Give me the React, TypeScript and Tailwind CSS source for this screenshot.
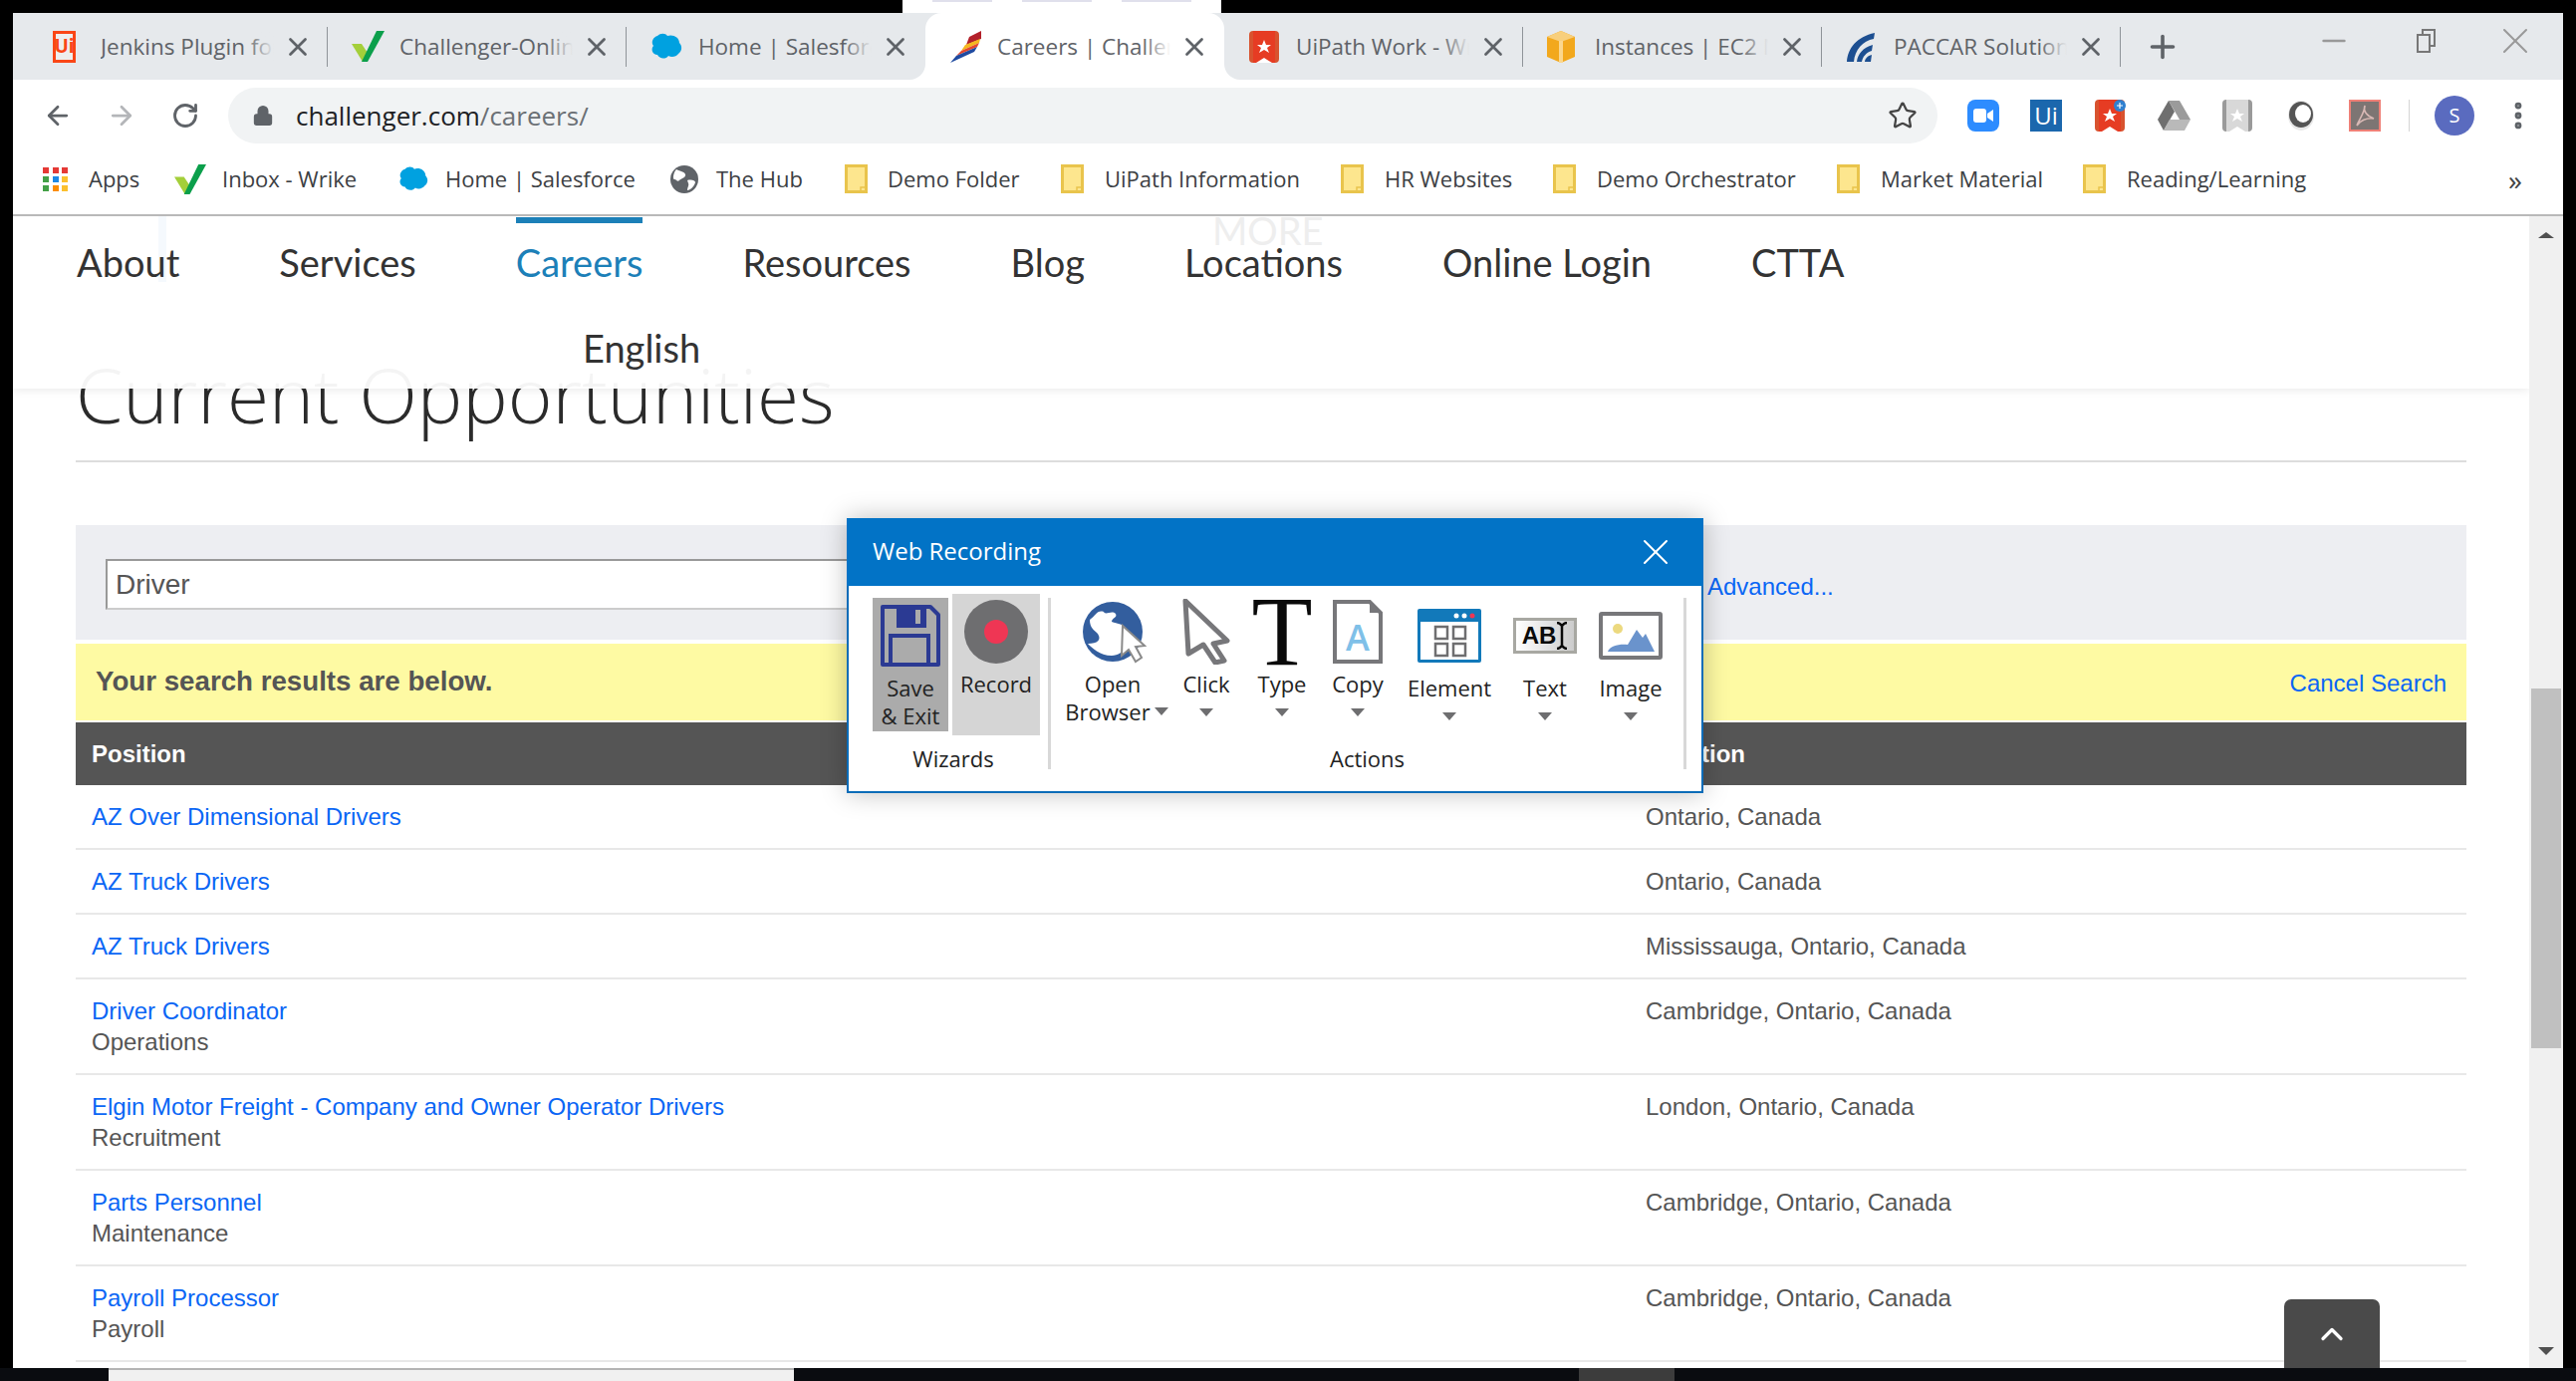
import { ArrowLeft, ArrowRight, RotateCw, Lock, Star, X, Plus, Minus, ChevronUp, EllipsisVertical } from 'lucide-react';
import type { ReactNode } from 'react';

// favicons
const UiFav = () => (
  <div className="w-[23px] h-[32px] border-[3px] border-[#fa4616] bg-[#eee] flex items-center justify-center text-[#fa4616] text-[19px] font-bold leading-none">Ui</div>
);
const WrikeCheck = ({ w = 33 }: { w?: number }) => (
  <svg width={w} height={w} viewBox="0 0 33 33">
    <path d="M0 14h10l6 9-5 9z" fill="#a4cf3a" />
    <path d="M10 32 25 1h8L16 32z" fill="#0b9f4b" />
  </svg>
);
const SfCloud = ({ w = 32 }: { w?: number }) => (
  <svg width={w} height={w} viewBox="0 0 32 32">
    <path d="M7 5c3-3 8-3 10 0 5-2 12 1 12 7 3 3 3 8-1 11-2 3-7 4-10 2-3 4-9 3-11-1-5 0-7-6-4-9-3-4 0-9 4-10z" fill="#00a1e0" />
  </svg>
);
const ChallengerFav = () => (
  <svg width="33" height="32" viewBox="0 0 33 32">
    <path d="M20 6 32 0v8L17 14z" fill="#b3202a" />
    <path d="M16 14 31 8l-1 4L12 20z" fill="#f5b81f" />
    <path d="M12 20 30 12l-2 4L7 25z" fill="#e5482d" />
    <path d="M7 25 28 16l-3 5L1 32z" fill="#1f4aa0" />
  </svg>
);
const RibbonFav = ({ plus = false, gray = false }: { plus?: boolean; gray?: boolean }) => (
  <svg width="32" height="32" viewBox="0 0 32 32">
    <rect x="1" y="0" width="30" height="32" rx="4" fill={gray ? '#9a9a9a' : '#d8532f'} />
    <rect x="5" y="0" width="22" height="32" fill={gray ? '#d8d8d8' : '#e63c23'} />
    <path d="M16 9l2 5h5l-4 3 2 5-5-3-5 3 2-5-4-3h5z" fill="#fff" />
    <path d="M8 32l8-5 8 5z" fill="#fff" />
    {plus && <circle cx="26" cy="6" r="6" fill="#2f80d0" />}
    {plus && <path d="M26 3v6M23 6h6" stroke="#fff" strokeWidth="1.2" />}
  </svg>
);
const BoxFav = () => (
  <svg width="28" height="32" viewBox="0 0 28 32">
    <path d="M14 0 28 6v20l-14 6L0 26V6z" fill="#f2a81d" />
    <path d="M14 0 28 6 14 11 0 6z" fill="#f8cf7c" />
    <path d="M12 10h4v22h-4z" fill="#fbd78e" />
  </svg>
);
const PaccarFav = () => (
  <svg width="30" height="32" viewBox="0 0 30 32">
    <path d="M1 31C2 17 11 6 29 2l-1 6C17 10 9 19 8 31z" fill="#1d4f91" />
    <path d="M11 31c1-8 6-14 16-17l-1 6c-6 2-9 6-10 11z" fill="#1d4f91" />
    <path d="M19 31c0-3 3-6 7-7l-1 7z" fill="#1d4f91" />
  </svg>
);
const Folder = () => (
  <svg width="23" height="29" viewBox="0 0 23 29">
    <path d="M1.5 1.5h20v26h-20z" fill="#fde68e" stroke="#e9c44c" strokeWidth="3" />
    <path d="M16 28v-5h5" fill="none" stroke="#e9c44c" strokeWidth="1.5" />
  </svg>
);
const AppsIcon = () => {
  const colors = ['#e53935', '#e53935', '#e53935', '#43a047', '#1e88e5', '#fbc02d', '#43a047', '#fb8c00', '#fbc02d'];
  return (
    <div className="grid grid-cols-3 gap-[3px] w-[26px]">
      {colors.map((c, i) => (
        <svg key={i} width="6" height="6"><rect width="6" height="6" fill={c} /></svg>
      ))}
    </div>
  );
};
const HubIcon = () => (
  <svg width="28" height="28" viewBox="0 0 28 28">
    <circle cx="14" cy="14" r="14" fill="#5f6368" />
    <path d="M6 4c4 2 8 2 9 5s-4 4-6 6-3-1-5-1-1-7 2-10zM17 15c4-1 8 0 8 2-1 4-5 8-8 8 0-3 2-5 1-7z" fill="#fff" />
  </svg>
);

type TabItem = { icon: ReactNode; title: string; active?: boolean; divider?: boolean };
const tabs: TabItem[] = [
  { icon: <UiFav />, title: 'Jenkins Plugin for UiPath', divider: true },
  { icon: <WrikeCheck />, title: 'Challenger-Online', divider: true },
  { icon: <SfCloud />, title: 'Home | Salesforce' },
  { icon: <ChallengerFav />, title: 'Careers | Challenger', active: true },
  { icon: <RibbonFav />, title: 'UiPath Work - Wrike', divider: true },
  { icon: <BoxFav />, title: 'Instances | EC2 Management', divider: true },
  { icon: <PaccarFav />, title: 'PACCAR Solutions', divider: true },
];

const Tab = ({ icon, title, active, divider }: TabItem) => (
  <div className={`relative w-[300px] h-[67px] flex items-center pl-[24px] shrink-0 ${active ? 'bg-white rounded-t-[16px]' : ''}`}>
    <div className="w-[48px] shrink-0 flex items-center">{icon}</div>
    <div className="relative w-[174px] overflow-hidden whitespace-nowrap text-[22.5px] text-[#5f6368]">
      {title}
      <div className={`absolute right-0 top-0 bottom-0 w-[28px] bg-gradient-to-r from-transparent ${active ? 'to-white' : 'to-[#e6e9ec]'}`} />
    </div>
    <X className="ml-[9px] w-[30px] h-[30px] text-[#5f6368]" strokeWidth={2.2} />
    {divider && <div className="ml-auto w-px h-[40px] bg-[#8f9499]" />}
    {active && (
      <>
        <div className="absolute -left-[16px] bottom-0 w-[16px] h-[16px] bg-white"><div className="w-full h-full bg-[#e6e9ec] rounded-br-[16px]" /></div>
        <div className="absolute -right-[16px] bottom-0 w-[16px] h-[16px] bg-white"><div className="w-full h-full bg-[#e6e9ec] rounded-bl-[16px]" /></div>
      </>
    )}
  </div>
);

const bookmarks: { icon: ReactNode; label: string; width: string; slot: string }[] = [
  { icon: <WrikeCheck w={32} />, label: 'Inbox - Wrike', width: 'w-[225px]', slot: 'w-[48px]' },
  { icon: <SfCloud w={30} />, label: 'Home | Salesforce', width: 'w-[273px]', slot: 'w-[47px]' },
  { icon: <HubIcon />, label: 'The Hub', width: 'w-[175px]', slot: 'w-[46px]' },
  { icon: <Folder />, label: 'Demo Folder', width: 'w-[217px]', slot: 'w-[43px]' },
  { icon: <Folder />, label: 'UiPath Information', width: 'w-[281px]', slot: 'w-[44px]' },
  { icon: <Folder />, label: 'HR Websites', width: 'w-[213px]', slot: 'w-[44px]' },
  { icon: <Folder />, label: 'Demo Orchestrator', width: 'w-[285px]', slot: 'w-[44px]' },
  { icon: <Folder />, label: 'Market Material', width: 'w-[247px]', slot: 'w-[44px]' },
  { icon: <Folder />, label: 'Reading/Learning', width: 'w-[300px]', slot: 'w-[44px]' },
];

const navItems = ['About', 'Services', 'Careers', 'Resources', 'Blog', 'Locations', 'Online Login', 'CTTA'];

const rows = [
  { title: 'AZ Over Dimensional Drivers', place: 'Ontario, Canada' },
  { title: 'AZ Truck Drivers', place: 'Ontario, Canada' },
  { title: 'AZ Truck Drivers', place: 'Mississauga, Ontario, Canada' },
  { title: 'Driver Coordinator', sub: 'Operations', place: 'Cambridge, Ontario, Canada' },
  { title: 'Elgin Motor Freight - Company and Owner Operator Drivers', sub: 'Recruitment', place: 'London, Ontario, Canada' },
  { title: 'Parts Personnel', sub: 'Maintenance', place: 'Cambridge, Ontario, Canada' },
  { title: 'Payroll Processor', sub: 'Payroll', place: 'Cambridge, Ontario, Canada' },
];

const Caret = () => (
  <svg width="14" height="8" viewBox="0 0 14 8"><path d="M0 0h14L7 8z" fill="#6e6e70" /></svg>
);

const ToolButton = ({ icon, label, labelGap, width }: { icon: ReactNode; label: string; labelGap: string; width: string }) => (
  <div className={`flex flex-col items-center ${width}`}>
    <div className="h-[68px] flex items-center justify-center">{icon}</div>
    <div className={`leading-[28px] ${labelGap}`}>{label}</div>
    <div className="mt-[11px] flex"><Caret /></div>
  </div>
);

export default function App() {
  return (
    <div className="relative w-[2586px] h-[1386px] bg-black overflow-hidden flex flex-col font-['Open_Sans']">
      {/* sliver of the window above */}
      <div className="h-[13px] shrink-0 pl-[906px]">
        <div className="w-[320px] h-[13px] bg-white flex gap-[30px] pl-[30px]">
          <div className="w-[60px] h-[2px] bg-[#e0e0ec]" />
          <div className="w-[70px] h-[2px] bg-[#e0e0ec]" />
          <div className="w-[70px] h-[2px] bg-[#e0e0ec]" />
        </div>
      </div>

      <div className="flex-1 min-h-0 mx-[13px] flex flex-col bg-white">
        {/* Tab strip */}
        <div className="h-[67px] shrink-0 bg-[#e6e9ec] flex items-center pl-[16px] relative">
          {tabs.map((t) => <Tab key={t.title} {...t} />)}
          <Plus className="ml-[24px] w-[36px] h-[36px] text-[#5f6368]" strokeWidth={2.4} />
          <div className="ml-auto flex items-center text-[#999] pr-[26px] -mt-[12px]">
            <Minus className="w-[36px] h-[36px]" strokeWidth={1.6} />
            <svg className="ml-[65px]" width="20" height="26" viewBox="0 0 20 26" fill="none" stroke="#777" strokeWidth="2">
              <rect x="1" y="7" width="12" height="17" />
              <path d="M6 7V2h12v16h-5" />
            </svg>
            <X className="ml-[57px] w-[44px] h-[44px]" strokeWidth={1.1} />
          </div>
        </div>

        {/* Address bar */}
        <div className="h-[72px] shrink-0 pt-[8px] flex items-start">
          <div className="w-[216px] h-[56px] flex items-center text-[#5f6368]">
            <ArrowLeft className="ml-[30px] w-[30px] h-[30px]" strokeWidth={2.2} />
            <ArrowRight className="ml-[34px] w-[30px] h-[30px] text-[#b4b6b9]" strokeWidth={2.2} />
            <RotateCw className="ml-[35px] w-[28px] h-[28px]" strokeWidth={2.4} />
          </div>
          <div className="w-[1716px] h-[56px] bg-[#f1f3f4] rounded-full flex items-center pl-[24px] pr-[20px]">
            <Lock className="w-[22px] h-[22px] text-[#5f6368] fill-[#5f6368]" />
            <span className="ml-[22px] text-[26px] text-[#202124]">challenger.com<span className="text-[#6b7075]">/careers/</span></span>
            <Star className="ml-auto w-[30px] h-[30px] text-[#444]" strokeWidth={1.8} />
          </div>
          <div className="flex items-center h-[56px] pl-[30px]">
            <div className="w-[32px] h-[32px] rounded-[8px] bg-[#2d8cff] flex items-center justify-center">
              <svg width="20" height="14" viewBox="0 0 20 14"><rect width="13" height="14" rx="3" fill="#fff" /><path d="M14 5l6-4v12l-6-4z" fill="#fff" /></svg>
            </div>
            <div className="ml-[31px] w-[32px] h-[32px] bg-[#1b67ad] text-white text-[24px] leading-[32px] text-center">Ui</div>
            <div className="ml-[32px] flex"><RibbonFav plus /></div>
            <svg className="ml-[32px]" width="33" height="30" viewBox="0 0 33 30">
              <path d="M11 0h11l11 19H22z" fill="#9b9b9b" /><path d="M11 0 0 19l6 11 11-19z" fill="#6f6f6f" /><path d="M6 30h21l6-11H12z" fill="#b9b9b9" />
            </svg>
            <div className="ml-[31px] flex"><RibbonFav gray /></div>
            <svg className="ml-[34px]" width="28" height="32" viewBox="0 0 28 32">
              <ellipse cx="14" cy="16" rx="13" ry="15" fill="#e8e8e8" /><ellipse cx="14" cy="15" rx="12" ry="13" fill="#555" /><ellipse cx="16" cy="14" rx="8" ry="9" fill="#fff" />
            </svg>
            <div className="ml-[34px] w-[32px] h-[32px] bg-[#7d7573] border-2 border-[#ef8077] flex items-center justify-center">
              <svg width="22" height="24" viewBox="0 0 22 24" fill="none" stroke="#d9b9b5" strokeWidth="1.6"><path d="M11 2c-2 6 2 10 9 13-7-1-14 2-17 7 2-6 8-13 8-20z" /></svg>
            </div>
            <div className="ml-[28px] w-px h-[32px] bg-[#d5d5d5]" />
            <div className="ml-[25px] w-[40px] h-[40px] rounded-full bg-[#5a6bbf] text-white text-[20px] flex items-center justify-center">S</div>
            <EllipsisVertical className="ml-[27px] w-[34px] h-[34px] text-[#5f6368]" strokeWidth={2.8} />
          </div>
        </div>

        {/* Bookmarks */}
        <div className="h-[65px] shrink-0 border-b-2 border-[#b9b9b9] flex items-center text-[22px] text-[#3c4043] pl-[30px] pb-[8px] whitespace-nowrap">
          <div className="w-[132px] flex items-center">
            <AppsIcon />
            <span className="ml-[20px]">Apps</span>
          </div>
          {bookmarks.map((b) => (
            <div key={b.label} className={`flex items-center shrink-0 ${b.width}`}>
              <div className={`${b.slot} flex`}>{b.icon}</div>
              <span>{b.label}</span>
            </div>
          ))}
          <span className="text-[28px] ml-[127px] text-[#444]">»</span>
        </div>

        {/* Page */}
        <div className="flex-1 min-h-0 flex">
          <div className="relative flex-1 overflow-hidden px-[63px] font-['Liberation_Sans'] text-[24px] text-[#555]">
            <div className="h-[247px] border-b-2 border-[#ddd] flex items-end pb-[25px]">
              <h1 className="font-['Open_Sans'] font-light text-[76.4px] leading-[84px] text-[#2b2b2b]">Current Opportunities</h1>
            </div>

            <div className="mt-[63px] h-[115px] bg-[#edeef2] flex items-center pl-[30px] pt-[4px]">
              <div className="w-[1400px] h-[51px] bg-white border-2 border-t-[#999] border-l-[#999] border-r-[#ccc] border-b-[#ccc] pl-[8px] flex items-center text-[28px]">Driver</div>
              <a className="ml-[208px] text-[#0a66f5] mt-[4px]">Advanced...</a>
            </div>
            <div className="mt-[4px] h-[77px] bg-[#fefaa3] flex items-center justify-between px-[20px]">
              <span className="font-bold text-[27.7px] pb-[2px]">Your search results are below.</span>
              <a className="text-[#0a66f5] mt-[2px]">Cancel Search</a>
            </div>
            <div className="mt-[2px] h-[63px] bg-[#555] text-white font-bold grid grid-cols-[1560px_1fr] items-center pl-[16px]">
              <div>Position</div>
              <div>Location</div>
            </div>
            {rows.map((r, i) => (
              <div key={i} className="grid grid-cols-[1560px_1fr] pl-[16px] py-[16px] border-b-2 border-[#e8e8e8] leading-[31px]">
                <div>
                  <a className="block text-[#0a66f5]">{r.title}</a>
                  {r.sub && <div>{r.sub}</div>}
                </div>
                <div>{r.place}</div>
              </div>
            ))}

            {/* Sticky nav over the page */}
            <div className="absolute left-0 right-0 top-0 h-[173px] bg-white/95 shadow-[0_2px_8px_rgba(0,0,0,0.08)] pl-[64px] text-[#333] font-['Lato'] text-[38px] leading-[48px]">
              <div className="absolute left-[1204px] -top-[10px] text-[#eeeeee]">MORE</div>
              <div className="absolute left-[146px] top-0 w-[8px] h-[66px] bg-[#f5f9fd]" />
              <div className="relative pt-[22px] flex gap-[100px]">
                {navItems.map((n) => (
                  <div key={n} className={`relative ${n === 'Careers' ? 'text-[#1c80b8]' : ''}`}>
                    {n}
                    {n === 'Careers' && <div className="absolute left-0 right-0 -top-[21px] h-[6px] bg-[#1c80b8]" />}
                  </div>
                ))}
              </div>
              <div className="relative pl-[508px] mt-[38px]">English</div>
            </div>

            {/* Back to top */}
            <div className="absolute right-[150px] bottom-0 w-[96px] h-[69px] bg-[#4a4a4a] rounded-t-[7px] flex justify-center pt-[17px]">
              <ChevronUp className="w-[36px] h-[36px] text-white" strokeWidth={2.2} />
            </div>
          </div>

          {/* Scrollbar */}
          <div className="w-[34px] shrink-0 bg-[#f0f0f0] flex flex-col items-center pt-[16px] pb-[13px]">
            <svg width="16" height="6" viewBox="0 0 16 6"><path d="M8 0l8 6H0z" fill="#505050" /></svg>
            <div className="mt-[452px] w-[30px] h-[361px] bg-[#c0c0c0]" />
            <svg className="mt-auto" width="16" height="8" viewBox="0 0 16 8"><path d="M0 0h16L8 8z" fill="#505050" /></svg>
          </div>
        </div>
      </div>

      {/* Strip of the desktop below */}
      <div className="h-[13px] shrink-0 flex bg-[#0a0c10]">
        <div className="ml-[109px] w-[688px] bg-[#f0f0f0] border-t-2 border-[#b4b4b4]" />
        <div className="ml-[788px] w-[96px] bg-[#3c3c3c]" />
      </div>

      {/* Web Recording toolbar */}
      <div className="absolute left-[850px] top-[520px] w-[860px] h-[276px] bg-white border-2 border-t-0 border-[#0a6cb8] shadow-[0_0_24px_rgba(0,0,0,0.25)] text-[22px] text-[#222] flex flex-col">
        <div className="h-[68px] shrink-0 -mx-[2px] bg-[#0273c6] text-white text-[24px] flex items-center justify-between pl-[26px] pr-[26px]">
          <span className="pb-[2px]">Web Recording</span>
          <X className="w-[44px] h-[44px]" strokeWidth={1.1} />
        </div>
        <div className="flex pt-[12px]">
          <div className="w-[200px] h-[172px] flex flex-col pl-[24px]">
            <div className="flex items-start gap-[4px] h-[150px]">
              <div className="w-[76px] h-[134px] bg-[#ababab] flex flex-col items-center pt-[6px] leading-[28px]">
                <svg width="62" height="64" viewBox="0 0 62 64" fill="none">
                  <path d="M3 3h48l8 8v50H3z" stroke="#2b3a93" strokeWidth="4" strokeLinejoin="round" />
                  <path d="M17 3h30v21H17z" fill="#2b3a93" />
                  <path d="M36 6h5v14h-5z" fill="#ababab" />
                  <path d="M11 61V32h38v29" stroke="#2b3a93" strokeWidth="4" />
                </svg>
                <div className="mt-[6px]">Save</div>
                <div>&amp; Exit</div>
              </div>
              <div className="-mt-[4px] w-[88px] h-[142px] bg-[#d5d5d5] flex flex-col items-center pt-[6px] leading-[28px]">
                <svg width="64" height="64" viewBox="0 0 64 64"><circle cx="32" cy="32" r="32" fill="#6e6e70" /><circle cx="32" cy="32" r="12" fill="#ef3654" /></svg>
                <div className="mt-[6px]">Record</div>
              </div>
            </div>
            <div className="mt-auto text-center leading-[28px] pr-[14px] translate-y-[3px]">Wizards</div>
          </div>
          <div className="w-[3px] h-[172px] bg-[#d8d8d8]" />
          <div className="w-[635px] h-[172px] flex flex-col relative">
            <div className="flex pl-[8px] h-[144px]">
              {/* Open Browser */}
              <div className="w-[108px] flex flex-col items-center">
                <div className="h-[68px] flex items-center justify-center">
                  <svg className="ml-[6px]" width="66" height="64" viewBox="0 0 66 64">
                    <circle cx="30" cy="32" r="30" fill="#335e9e" />
                    <path d="M7 20c6-4 7-10 14-8 2 4 8-2 12 2 2 4-4 4-4 8 6 2 10 2 14 6 6 6 8 12 2 18-4 6-10 10-16 10-12 0-20-8-24-12 10 0 14-4 10-10-4-4-8-6-8-14z" fill="#fff" />
                    <path d="M40 26l22 20-9 1 6 11-6 4-7-12-7 6z" fill="#fff" stroke="#8a8a8a" strokeWidth="2" />
                  </svg>
                </div>
                <div className="mt-[4px] leading-[28px]">Open</div>
                <div className="leading-[28px] whitespace-nowrap flex items-center pl-[8px]">Browser<span className="ml-[4px] flex"><Caret /></span></div>
              </div>
              <ToolButton width="w-[80px]" labelGap="mt-[4px]" label="Click" icon={
                <svg width="48" height="66" viewBox="0 0 48 66" fill="none"><path d="M3 3l42 40-14 3 11 17-9 2-12-18-15 9z" stroke="#77777a" strokeWidth="5" strokeLinejoin="round" transform="translate(0 -1)" /></svg>
              } />
              <ToolButton width="w-[72px]" labelGap="mt-[4px]" label="Type" icon={
                <span className="font-['Liberation_Serif'] text-[100px] leading-[68px] text-[#0a0a0a]">T</span>
              } />
              <ToolButton width="w-[80px]" labelGap="mt-[4px]" label="Copy" icon={
                <div className="relative">
                  <svg width="50" height="64" viewBox="0 0 50 64" fill="none"><path d="M2 2h35l11 11v49H2z" stroke="#77777a" strokeWidth="4" /><path d="M37 2v11h11z" fill="#77777a" /></svg>
                  <span className="absolute left-[13px] top-[18px] text-[36px] leading-[40px] text-[#7fc0e8] font-semibold">A</span>
                </div>
              } />
              <ToolButton width="w-[104px]" labelGap="mt-[8px]" label="Element" icon={
                <svg className="mt-[8px]" width="64" height="54" viewBox="0 0 64 54">
                  <rect width="64" height="54" rx="2" fill="#1279ba" />
                  <rect x="3" y="13" width="58" height="38" fill="#fff" />
                  <circle cx="39" cy="7" r="2.5" fill="#fff" /><circle cx="47" cy="7" r="2.5" fill="#fff" /><circle cx="55" cy="7" r="2.5" fill="#ef3654" />
                  <g fill="none" stroke="#6e6e70" strokeWidth="2.5">
                    <rect x="18" y="18" width="12" height="12" /><rect x="36" y="18" width="12" height="12" /><rect x="18" y="35" width="12" height="12" /><rect x="36" y="35" width="12" height="12" />
                  </g>
                </svg>
              } />
              <ToolButton width="w-[88px]" labelGap="mt-[8px]" label="Text" icon={
                <div className="mt-[8px] w-[64px] h-[36px] bg-gradient-to-r from-white to-[#ccc] border-[3px] border-[#a8a8a2] flex items-center justify-center text-[#0a0a0a] font-['Liberation_Sans'] font-bold text-[24px] leading-none">
                  AB<svg width="12" height="28" viewBox="0 0 12 28" fill="none" stroke="#0a0a0a" strokeWidth="2.5"><path d="M1 1c3 0 4 2 5 3 1-1 2-3 5-3M6 4v20M1 27c3 0 4-2 5-3 1 1 2 3 5 3" /></svg>
                </div>
              } />
              <ToolButton width="w-[84px]" labelGap="mt-[8px]" label="Image" icon={
                <svg className="mt-[8px]" width="64" height="48" viewBox="0 0 64 48">
                  <rect x="2" y="2" width="60" height="44" rx="1" fill="#fff" stroke="#77777a" strokeWidth="4" />
                  <circle cx="19" cy="17" r="5" fill="#ecd97f" />
                  <path d="M9 40c2-6 12-8 20-7l9-15 6 8 3-4 9 18z" fill="#6a93cc" />
                </svg>
              } />
            </div>
            <div className="mt-auto text-center leading-[28px] translate-y-[3px]">Actions</div>
          </div>
          <div className="w-[3px] h-[172px] bg-[#d8d8d8]" />
        </div>
      </div>
    </div>
  );
}
